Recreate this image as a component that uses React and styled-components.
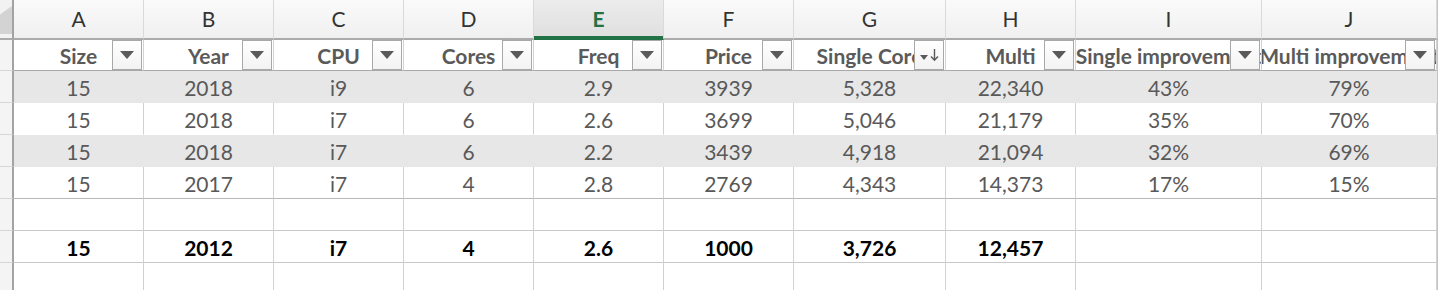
import React from "react";
import styled, { createGlobalStyle } from "styled-components";

const COLS = "14px repeat(6, 130px) 152px 130px 186px 175px 1fr";

const GlobalStyle = createGlobalStyle`
  body {
    margin: 0;
    background: #fff;
    font-family: "Lato", "Open Sans", sans-serif;
  }
`;

const letters = ["A", "B", "C", "D", "E", "F", "G", "H", "I", "J"];
const headers = [
  "Size",
  "Year",
  "CPU",
  "Cores",
  "Freq",
  "Price",
  "Single Core",
  "Multi",
  "Single improvement",
  "Multi improvement",
];
const rows = [
  ["15", "2018", "i9", "6", "2.9", "3939", "5,328", "22,340", "43%", "79%"],
  ["15", "2018", "i7", "6", "2.6", "3699", "5,046", "21,179", "35%", "70%"],
  ["15", "2018", "i7", "6", "2.2", "3439", "4,918", "21,094", "32%", "69%"],
  ["15", "2017", "i7", "4", "2.8", "2769", "4,343", "14,373", "17%", "15%"],
];
const totals = ["15", "2012", "i7", "4", "2.6", "1000", "3,726", "12,457", "", ""];

export default function App() {
  return (
    <>
      <GlobalStyle />
      <Sheet>
        <Row>
          <Corner />
          {letters.map((l) => (
            <ColLetter key={l} $active={l === "E"}>
              {l}
            </ColLetter>
          ))}
          <Edge $top />
        </Row>

        <Row>
          <RowHead $rule="#d6d6d6" />
          {headers.map((h, i) => (
            <HeadCell key={h}>
              <HeadText>{h}</HeadText>
              <FilterButton>
                {i === 6 ? (
                  <>
                    <Caret $small />
                    <SortArrow width="9" height="14" viewBox="0 0 9 14">
                      <path d="M4.5 1v11M1 8.5l3.5 3.8L8 8.5" fill="none" stroke="#5a5a5a" strokeWidth="1.4" />
                    </SortArrow>
                  </>
                ) : (
                  <Caret />
                )}
              </FilterButton>
            </HeadCell>
          ))}
          <Edge />
        </Row>

        {rows.map((r, ri) => {
          const band = ri % 2 === 0;
          const rule = band ? "#e7e7e7" : ri === rows.length - 1 ? "#b8b8b8" : "#fff";
          return (
            <Row key={ri}>
              <RowHead $rule="#d6d6d6" />
              {r.map((v, ci) => (
                <Cell key={ci} $band={band} $rule={rule}>
                  {v}
                </Cell>
              ))}
              <Edge />
            </Row>
          );
        })}

        <Row>
          <RowHead $rule="#d6d6d6" />
          {letters.map((l) => (
            <Cell key={l} $rule="#c8c8c8" />
          ))}
          <Edge />
        </Row>

        <Row>
          <RowHead $rule="#d6d6d6" />
          {totals.map((v, ci) => (
            <Cell key={ci} $rule="#c8c8c8" $bold>
              {v}
            </Cell>
          ))}
          <Edge />
        </Row>

        <Row>
          <RowHead $rule="#d6d6d6" />
          {letters.map((l) => (
            <Cell key={l} $rule="#c8c8c8" />
          ))}
          <Edge />
        </Row>
      </Sheet>
    </>
  );
}

const Sheet = styled.div`
  display: flex;
  flex-direction: column;
  width: 1438px;
  height: 290px;
  overflow: hidden;
`;

const Row = styled.div`
  display: grid;
  grid-template-columns: ${COLS};
`;

const Corner = styled.div`
  position: relative;
  height: 40px;
  box-sizing: border-box;
  background: #f2f2f2;
  border-right: 2px solid #a3a3a3;
  border-bottom: 2px solid #ababab;
  &::after {
    content: "";
    position: absolute;
    left: 0;
    right: 0;
    top: 6px;
    bottom: 4px;
    background: #d3d3d3;
    clip-path: polygon(0 30%, 100% 0, 100% 100%, 0 100%);
  }
`;

const ColLetter = styled.div`
  height: 40px;
  box-sizing: border-box;
  display: flex;
  align-items: center;
  justify-content: center;
  padding-bottom: 2px;
  font-size: 21px;
  color: ${(p) => (p.$active ? "#217346" : "#333")};
  font-weight: ${(p) => (p.$active ? 700 : 400)};
  background: ${(p) =>
    p.$active
      ? "linear-gradient(#ececec, #dfdfdf)"
      : "linear-gradient(#fafafa, #f0f0f0)"};
  border-right: 1px solid #dadada;
  border-bottom: 2px solid ${(p) => (p.$active ? "#217346" : "#ababab")};
  box-shadow: ${(p) => (p.$active ? "inset 0 -2px 0 #217346" : "none")};
`;

const Edge = styled.div`
  box-sizing: border-box;
  border-left: 1px solid #c4c4c4;
  background: ${(p) => (p.$top ? "#f0f0f0" : "#fff")};
  border-bottom: ${(p) => (p.$top ? "2px solid #ababab" : "none")};
`;

const RowHead = styled.div`
  box-sizing: border-box;
  background: #f4f4f4;
  border-right: 2px solid #a3a3a3;
  border-bottom: 1px solid ${(p) => p.$rule};
`;

const HeadCell = styled.div`
  position: relative;
  height: 31px;
  box-sizing: border-box;
  display: flex;
  align-items: center;
  justify-content: center;
  overflow: hidden;
  background: #fff;
  border-right: 1px solid #d2d2d2;
  border-bottom: 1px solid #a9a9a9;
  font-size: 21px;
  font-weight: 700;
  color: #5a5a5a;
`;

const HeadText = styled.span`
  white-space: nowrap;
  flex-shrink: 0;
`;

const FilterButton = styled.div`
  position: absolute;
  top: 0;
  right: 1px;
  bottom: 0;
  width: 30px;
  box-sizing: border-box;
  display: flex;
  align-items: center;
  justify-content: center;
  gap: 2px;
  background: linear-gradient(#ffffff, #f3f3f3);
  border: 1px solid #a8a8a8;
`;

const Caret = styled.span`
  width: 0;
  height: 0;
  margin-top: ${(p) => (p.$small ? "4px" : "0")};
  border-left: ${(p) => (p.$small ? "4px" : "7px")} solid transparent;
  border-right: ${(p) => (p.$small ? "4px" : "7px")} solid transparent;
  border-top: ${(p) => (p.$small ? "5px" : "8px")} solid #5a5a5a;
`;

const SortArrow = styled.svg`
  display: block;
`;

const Cell = styled.div`
  height: 32px;
  box-sizing: border-box;
  display: flex;
  align-items: center;
  justify-content: center;
  padding-top: 2px;
  background: ${(p) => (p.$band ? "#e7e7e7" : "#fff")};
  border-right: 1px solid ${(p) => (p.$band ? "#e7e7e7" : "#d2d2d2")};
  border-bottom: 1px solid ${(p) => p.$rule};
  font-size: 21px;
  font-weight: ${(p) => (p.$bold ? 700 : 400)};
  color: ${(p) => (p.$bold ? "#000" : "#595959")};
`;
